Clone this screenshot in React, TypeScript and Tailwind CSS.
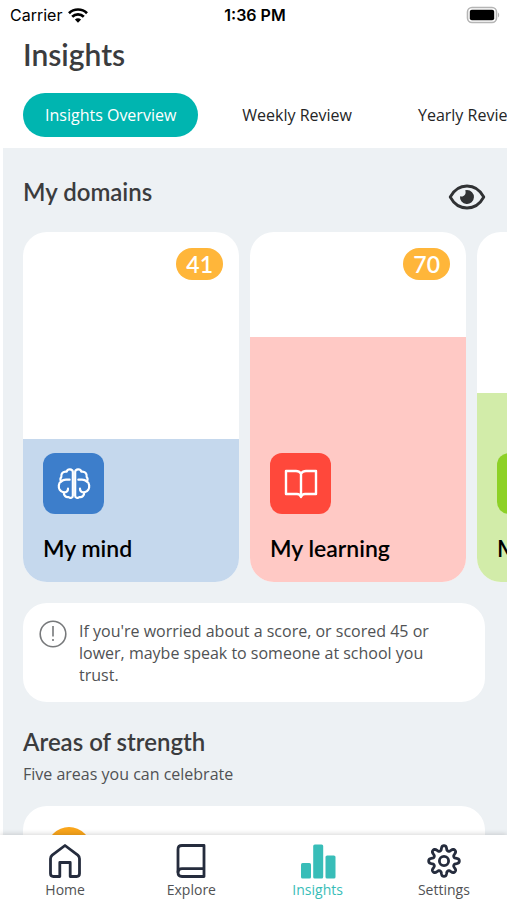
import type { ReactNode } from "react";
import cn from "clsx";

type Domain = {
  name: string;
  score: number;
  fillClass: string;
  iconClass: string;
  icon: ReactNode;
};

type NavItem = {
  label: string;
  icon: ReactNode;
  active?: boolean;
};

const BrainIcon = () => (
  <svg viewBox="0 0 102 102" className="h-[34px] w-[34px]" fill="none" stroke="currentColor" strokeWidth="6.6" strokeLinecap="round" strokeLinejoin="round">
    {["", "matrix(-1 0 0 1 102 0)"].map((transform) => (
      <g key={transform} transform={transform}>
        <path d="M54.5 14C56 6 70 4 73 14C83 12 91 20 89 30C92 33 92 39 90 43C98 48 98 62 94 68C91 73 87 75 82 76C82 86 75 92 67 90C62 95 54.5 92 54.5 86V14" />
        <path d="M64 38H75C82 38 86 40 90 44" />
        <path d="M69 65C69 71 74 76 82 76" />
      </g>
    ))}
  </svg>
);

const BookIcon = () => (
  <svg viewBox="0 0 34 32" className="h-8 w-[34px]" fill="none" stroke="currentColor" strokeWidth="2.4" strokeLinejoin="round" strokeLinecap="round">
    <path d="M17 5.5C15.6 3.6 14.2 3 12 3H2V26H13C15 26 16.4 26.8 17 29C17.6 26.8 19 26 21 26H32V3H22C19.8 3 18.4 3.6 17 5.5Z" />
    <path d="M17 6V28" />
  </svg>
);

const HeartIcon = () => (
  <svg viewBox="0 0 32 32" className="h-8 w-8" fill="none" stroke="currentColor" strokeWidth="2.4" strokeLinejoin="round">
    <path d="M16 27L5 16C1 11 4 5 9 5C12 5 15 7 16 10C17 7 20 5 23 5C28 5 31 11 27 16Z" />
  </svg>
);

const EyeIcon = () => (
  <svg viewBox="0 0 38 26" className="h-[26px] w-[38px]" fill="none">
    <path d="M2.2 13C6 6 12 2 19 2S32 6 35.8 13C32 20 26 24 19 24S6 20 2.2 13Z" stroke="#303234" strokeWidth="2.8" strokeLinejoin="round" />
    <path d="M19 6A7 7 0 1 1 12 12.2C14.8 13.6 19 11 17.2 6.3Z" fill="#303234" />
  </svg>
);

const WifiIcon = () => (
  <svg viewBox="0 0 20 15" className="h-[15px] w-5" fill="none" stroke="#000" strokeWidth="2.7">
    <path d="M1 5.2A12.8 12.8 0 0 1 19 5.2" />
    <path d="M4.2 8.8A8.2 8.2 0 0 1 15.8 8.8" />
    <path d="M10 14.8L6.9 11.6A4.5 4.5 0 0 1 13.1 11.6Z" fill="#000" stroke="none" />
  </svg>
);

const BatteryIcon = () => (
  <svg viewBox="0 0 34 18" className="h-[18px] w-[34px]">
    <rect x="1.5" y="1.5" width="29" height="15" rx="4.5" fill="#fff" stroke="#b5b5b5" strokeWidth="1.6" />
    <rect x="3.8" y="3.8" width="24.4" height="10.4" rx="2" fill="#000" />
    <path d="M32 6.5C33.6 7.4 33.6 10.6 32 11.5Z" fill="#b5b5b5" />
  </svg>
);

const HomeIcon = () => (
  <svg viewBox="0 0 34 36" className="h-9 w-[34px]" fill="none" stroke="currentColor" strokeWidth="2.8" strokeLinejoin="round">
    <path d="M17 2.5L4.2 12.2C3 13.2 2.5 14.2 2.5 15.8V30.5C2.5 32.6 3.6 33.5 5.4 33.5H11.8V19.5H22.2V33.5H28.6C30.4 33.5 31.5 32.6 31.5 30.5V15.8C31.5 14.2 31 13.2 29.8 12.2Z" />
  </svg>
);

const ExploreIcon = () => (
  <svg viewBox="0 0 34 36" className="h-9 w-[34px]" fill="none" stroke="currentColor" strokeWidth="2.8" strokeLinejoin="round">
    <path d="M30 2.5H8C5.2 2.5 4 4 4 6.4V29.6C4 32 5.2 33.5 8 33.5H30Z" />
    <path d="M4 29.5C4 27 5.4 25.6 8 25.6H30" />
  </svg>
);

const InsightsIcon = () => (
  <svg viewBox="0 0 36 36" className="h-9 w-9" fill="currentColor">
    <rect x="1" y="20" width="10" height="15.5" rx="1.6" />
    <rect x="13.2" y="1.5" width="10" height="34" rx="1.6" />
    <rect x="25.5" y="12.5" width="10" height="23" rx="1.6" />
  </svg>
);

// eight rounded teeth around the hub
const gearPoints = Array.from({ length: 160 }, (_, i) => {
  const a = (i / 160) * Math.PI * 2;
  const r = 13 + 2.5 * Math.tanh(1.6 * Math.cos(8 * a));
  return `${(18 + r * Math.sin(a)).toFixed(2)},${(18 - r * Math.cos(a)).toFixed(2)}`;
}).join(" ");

const SettingsIcon = () => (
  <svg viewBox="0 0 36 36" className="h-9 w-9" fill="none" stroke="currentColor" strokeWidth="2.8" strokeLinejoin="round">
    <polygon points={gearPoints} />
    <circle cx="18" cy="18" r="4.6" />
  </svg>
);

const tabs = ["Insights Overview", "Weekly Review", "Yearly Review"];

const domains: Domain[] = [
  { name: "My mind", score: 41, fillClass: "bg-[#c5d8ed]", iconClass: "bg-[#3d7ecb]", icon: <BrainIcon /> },
  { name: "My learning", score: 70, fillClass: "bg-[#ffc9c5]", iconClass: "bg-[#ff483b]", icon: <BookIcon /> },
  { name: "My body", score: 54, fillClass: "bg-[#d2eca9]", iconClass: "bg-[#8dd126]", icon: <HeartIcon /> },
];

const navItems: NavItem[] = [
  { label: "Home", icon: <HomeIcon /> },
  { label: "Explore", icon: <ExploreIcon /> },
  { label: "Insights", icon: <InsightsIcon />, active: true },
  { label: "Settings", icon: <SettingsIcon /> },
];

const StatusBar = () => (
  <div className="grid h-[30px] grid-cols-3 items-center pl-[10px] pr-[7px] font-['Inter',sans-serif] text-base text-black">
    <div className="flex items-center gap-[6px]">
      <span>Carrier</span>
      <WifiIcon />
    </div>
    <span className="text-center font-semibold">1:36 PM</span>
    <div className="flex justify-end">
      <BatteryIcon />
    </div>
  </div>
);

const DomainCard = ({ name, score, fillClass, iconClass, icon }: Domain) => (
  <article className="relative flex h-[350px] w-[216px] shrink-0 flex-col justify-between overflow-hidden rounded-3xl bg-white">
    <div className={cn("absolute inset-x-0 bottom-0", fillClass)} style={{ height: `${score}%` }} />
    <span className="relative mt-4 mr-4 self-end rounded-full bg-[#ffb63a] px-[10px] font-['Lato',sans-serif] text-[23px] leading-8 font-semibold text-white">
      {score}
    </span>
    <div className="relative flex flex-col gap-4 px-5 pb-4">
      <div className={cn("flex h-[61px] w-[61px] items-center justify-center rounded-xl text-white", iconClass)}>
        {icon}
      </div>
      <h3 className="font-['Lato',sans-serif] text-[23px] leading-9 font-semibold whitespace-nowrap text-black">{name}</h3>
    </div>
  </article>
);

const App = () => {
  return (
    <div className="flex h-dvh flex-col overflow-hidden bg-white font-['Open_Sans',sans-serif] text-[#505254]">
      <header className="shrink-0">
        <StatusBar />
        <h1 className="px-[23px] pt-[3px] font-['Lato',sans-serif] text-[30px] leading-[42px] font-semibold text-[#3b3c3e]">Insights</h1>
        <div className="mt-[18px] flex overflow-hidden pb-[11px] pl-[23px]">
          {tabs.map((tab, i) => (
            <button
              key={tab}
              type="button"
              className={cn("h-11 shrink-0 rounded-full px-[22px] text-base whitespace-nowrap", {
                "bg-[#00b5b0] text-white": i === 0,
                "ml-[22px] text-[#242526]": i !== 0,
              })}
            >
              {tab}
            </button>
          ))}
        </div>
      </header>

      <main className="ml-[3px] min-h-0 flex-1 overflow-hidden bg-[#edf1f4] pl-5">
        <div className="flex items-end justify-between pt-7 pr-[21px] pb-[22px]">
          <h2 className="pb-[2px] font-['Lato',sans-serif] text-[24px] leading-8 font-semibold text-[#3b3c3e]">My domains</h2>
          <button type="button" aria-label="Show scores">
            <EyeIcon />
          </button>
        </div>

        <div className="flex gap-[11px] overflow-hidden">
          {domains.map((domain) => (
            <DomainCard key={domain.name} {...domain} />
          ))}
        </div>

        <div className="mt-[21px] mr-[22px] flex items-start gap-3 rounded-3xl bg-white pt-[17px] pr-10 pb-4 pl-4">
          <svg viewBox="0 0 28 28" className="h-7 w-7 shrink-0" fill="none" stroke="#77797b" strokeWidth="1.6">
            <circle cx="14" cy="14" r="12.8" />
            <path d="M14 6V16.5M14 19V21" />
          </svg>
          <p className="text-base leading-[22px]">
            If you're worried about a score, or scored 45 or lower, maybe speak to someone at school you trust.
          </p>
        </div>

        <h2 className="mt-6 font-['Lato',sans-serif] text-[24px] leading-8 font-semibold text-[#3b3c3e]">Areas of strength</h2>
        <p className="mt-1 text-base leading-6">Five areas you can celebrate</p>
        <div className="mt-5 mr-[22px] h-40 rounded-3xl bg-white px-6 pt-[21px]">
          <div className="h-11 w-11 rounded-full bg-[#f9a51b]" />
        </div>
      </main>

      <nav className="relative grid h-[65px] shrink-0 grid-cols-4 bg-white pl-[2px] shadow-[0_-1px_5px_rgba(0,0,0,0.16)]">
        {navItems.map(({ label, icon, active }) => (
          <a
            key={label}
            href="#"
            className={cn("flex flex-col items-center gap-px pt-2 text-sm leading-5", active ? "text-[#38bdb8]" : "text-[#505254]")}
          >
            <span className={active ? "text-[#38bdb8]" : "text-[#252c3d]"}>{icon}</span>
            {label}
          </a>
        ))}
      </nav>
    </div>
  );
};

export default App;
